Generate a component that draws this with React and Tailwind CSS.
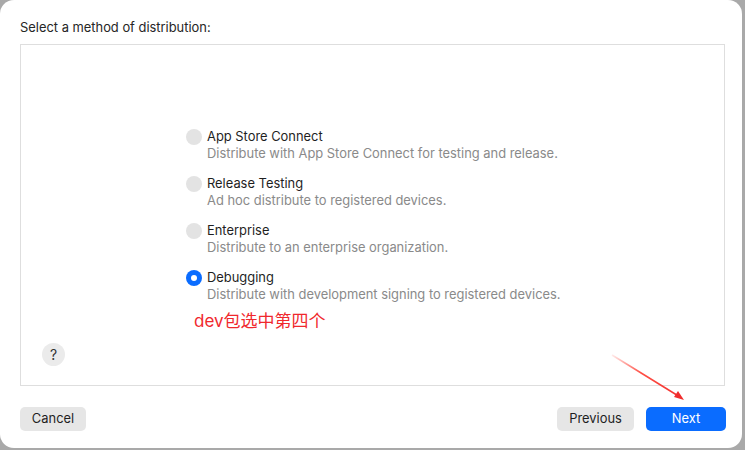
const options = [
  {
    title: "App Store Connect",
    desc: "Distribute with App Store Connect for testing and release.",
  },
  { title: "Release Testing", desc: "Ad hoc distribute to registered devices." },
  { title: "Enterprise", desc: "Distribute to an enterprise organization." },
  {
    title: "Debugging",
    desc: "Distribute with development signing to registered devices.",
    selected: true,
  },
];

function Radio({ selected }) {
  if (selected) {
    return (
      <span className="w-[16px] h-[16px] rounded-full bg-[#0a6cff] flex items-center justify-center shrink-0">
        <span className="w-[6px] h-[6px] rounded-full bg-white" />
      </span>
    );
  }
  return <span className="w-[16px] h-[16px] rounded-full bg-[#e3e3e3] shrink-0" />;
}

export default function App() {
  return (
    <div
      className="relative w-[745px] h-[450px] bg-[#a9a9a9] overflow-hidden"
      style={{ fontFamily: 'Inter, "Noto Sans CJK SC", sans-serif' }}
    >
      <div className="w-[742px] h-[448px] bg-white rounded-[14px] flex flex-col pl-[20px] pr-[17px]">
        <p className="pt-[20px] text-[12.9px] leading-[16px] text-[#262626]">
          Select a method of distribution:
        </p>

        {/* options panel */}
        <div className="mt-[8px] h-[342px] border border-[#dedede] flex flex-col pl-[165px] pt-[84px] pb-[19px]">
          <div className="flex flex-col gap-[14px]">
            {options.map((o) => (
              <div key={o.title} className="flex gap-[5px]">
                <Radio selected={o.selected} />
                <div className="flex flex-col">
                  <span className="text-[12.9px] leading-[16px] text-[#1f1f1f]">{o.title}</span>
                  <span className="text-[12.9px] leading-[17px] text-[#8a8a8a]">{o.desc}</span>
                </div>
              </div>
            ))}
          </div>
          <p className="mt-[7px] ml-[8px] text-[17px] leading-[22px] text-[#f0282d]">
            dev包选中第四个
          </p>
          <button className="mt-auto -ml-[144px] w-[23px] h-[23px] rounded-full bg-[#ebebeb] text-[14px] text-[#333] flex items-center justify-center">
            ?
          </button>
        </div>

        {/* footer buttons */}
        <div className="mt-[21px] flex items-center">
          <button className="h-[24px] w-[66px] rounded-[5px] bg-[#e6e6e6] text-[12.9px] text-[#1f1f1f]">
            Cancel
          </button>
          <button className="ml-auto h-[24px] w-[77px] rounded-[5px] bg-[#e6e6e6] text-[12.9px] text-[#1f1f1f]">
            Previous
          </button>
          <button className="ml-[12px] mr-[-1px] h-[24px] w-[80px] rounded-[5px] bg-[#0a6cff] text-[12.9px] text-white">
            Next
          </button>
        </div>
      </div>

      {/* annotation arrow */}
      <svg className="absolute left-0 top-0 pointer-events-none" width="745" height="450">
        <defs>
          <linearGradient id="fade" x1="612" y1="355" x2="684" y2="400" gradientUnits="userSpaceOnUse">
            <stop offset="0" stopColor="#ff3b30" stopOpacity="0.1" />
            <stop offset="0.4" stopColor="#ff3b30" stopOpacity="0.9" />
            <stop offset="1" stopColor="#f02d2d" />
          </linearGradient>
        </defs>
        <line x1="612" y1="355" x2="680" y2="397" stroke="url(#fade)" strokeWidth="1.5" />
        <polygon points="684,400 674,397 678,391" fill="#f02d2d" />
      </svg>
    </div>
  );
}
